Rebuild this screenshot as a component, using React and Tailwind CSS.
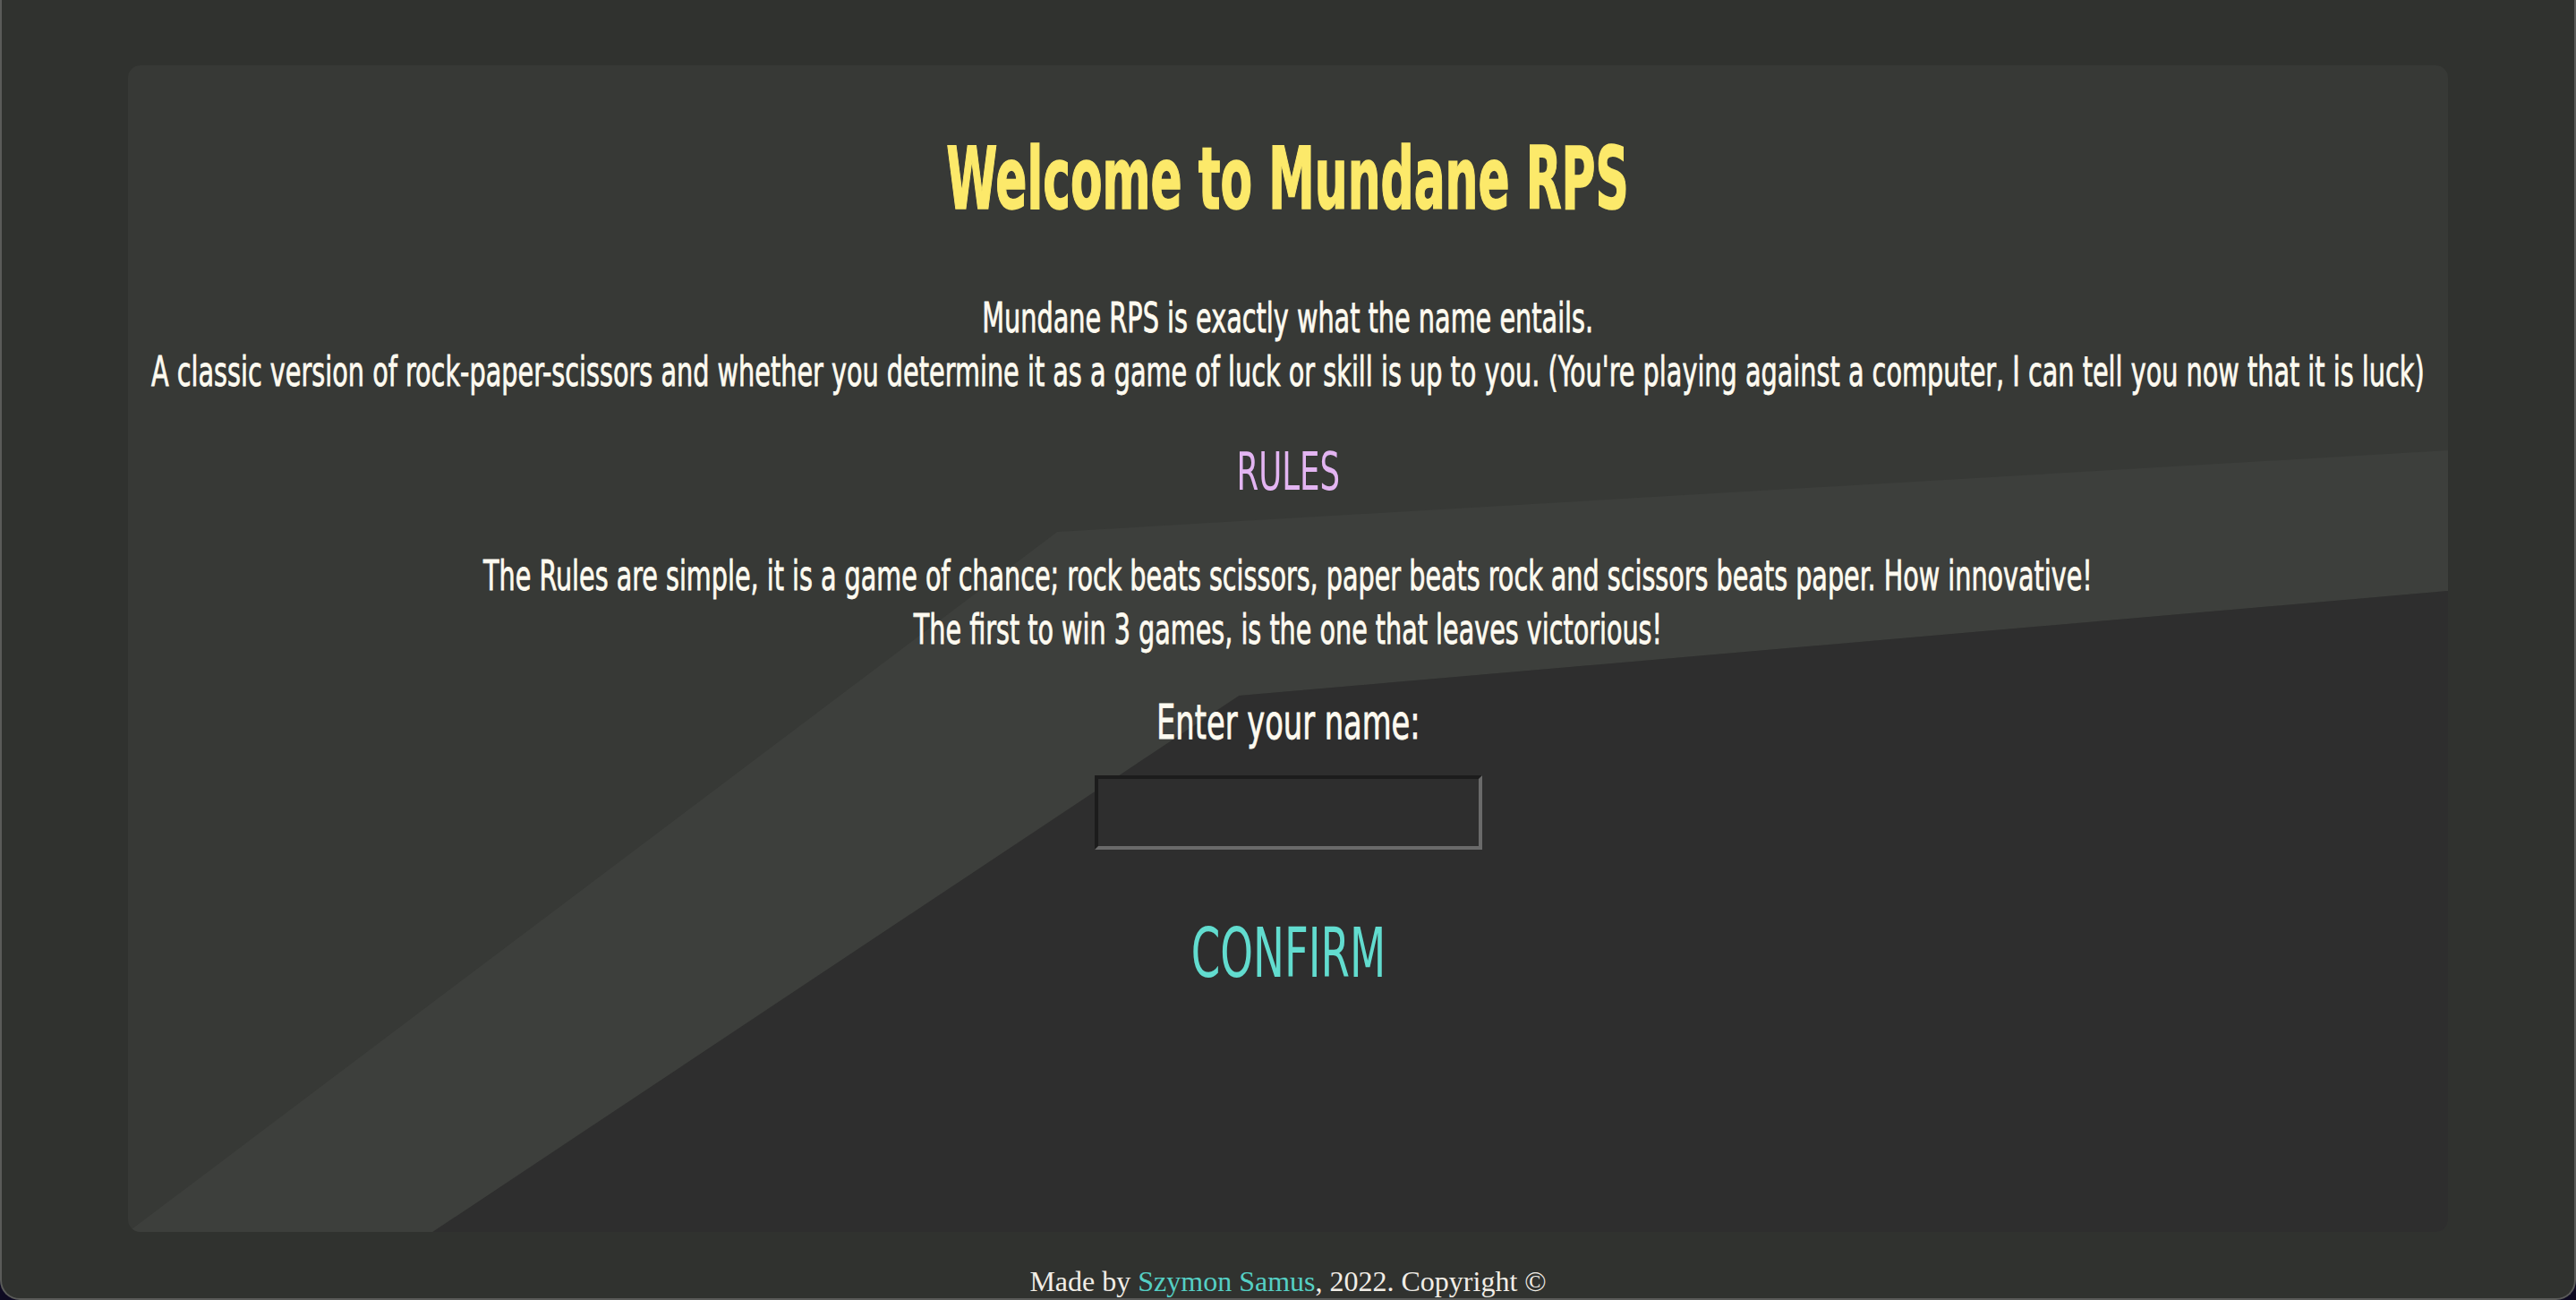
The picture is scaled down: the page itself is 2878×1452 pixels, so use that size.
import React, { useState } from 'react';

const narrow = "font-['DejaVu_Sans_Condensed','DejaVu_Sans',sans-serif]";

const CardBackdrop = () => (
  <svg
    className="absolute inset-0 h-full w-full"
    viewBox="0 0 2589 1303"
    preserveAspectRatio="none"
    aria-hidden="true"
  >
    <rect width="2589" height="1303" fill="#373936" />
    <polygon points="0,1303 1037,521 2589,430 2589,587 1240,704 340,1303" fill="#3d3f3c" />
    <polygon points="340,1303 1240,704 2589,587 2589,1303" fill="#2e2e2e" />
  </svg>
);

const App = () => {
  const [name, setName] = useState('');

  return (
    <div className="min-h-screen bg-[#0e0a22]">
      <div className="flex h-[1452px] flex-col overflow-hidden rounded-b-[22px] border-2 border-t-0 border-[#5a5b59] bg-[#30322f]">
        <div className="px-[141px] pt-[73px]">
          <div className="relative h-[1303px] overflow-hidden rounded-[14px]">
            <CardBackdrop />

            {/* text is squeezed horizontally to stand in for a condensed display face */}
            <div className={`relative flex flex-col items-center text-center text-[#fdfaf0] ${narrow}`}>
              <h1 className="mt-[67px] w-max scale-x-[0.6] text-[96px] leading-[120px] font-bold whitespace-nowrap text-[#fce96a] [-webkit-text-stroke:1.5px_#fce96a]">
                Welcome to Mundane RPS
              </h1>

              <p className="mt-[65px] w-max scale-x-[0.694] text-[46px] leading-[60px] whitespace-nowrap [-webkit-text-stroke:0.8px_#fdfaf0]">
                Mundane RPS is exactly what the name entails.
                <br />
                A classic version of rock-paper-scissors and whether you determine it as a game of luck or skill is up to you. (You're playing against a computer, I can tell you now that it is luck)
              </p>

              <h2 className="mt-[47px] w-max scale-x-[0.67] text-[59px] leading-[70px] text-[#e3b5f2]">RULES</h2>

              <p className="mt-[51px] w-max scale-x-[0.692] text-[46px] leading-[60px] whitespace-nowrap [-webkit-text-stroke:0.8px_#fdfaf0]">
                The Rules are simple, it is a game of chance; rock beats scissors, paper beats rock and scissors beats paper. How innovative!
                <br />
                The first to win 3 games, is the one that leaves victorious!
              </p>

              <label htmlFor="player-name" className="mt-[42px] w-max scale-x-[0.707] text-[53px] leading-[64px] whitespace-nowrap [-webkit-text-stroke:0.8px_#fdfaf0]">
                Enter your name:
              </label>

              <input
                id="player-name"
                type="text"
                value={name}
                onChange={(e) => setName(e.target.value)}
                className="mt-[27px] h-[83px] w-[433px] border-4 border-t-[#1c1c1c] border-l-[#1c1c1c] border-r-[#6a6a6a] border-b-[#6a6a6a] bg-[#2e2e2e] px-3 text-[40px] text-[#fdfaf0] outline-none"
              />

              <button className="mt-[71px] w-max scale-x-[0.674] text-[77px] leading-[90px] text-[#62dccf]">
                CONFIRM
              </button>
            </div>
          </div>
        </div>

        <footer className="mt-[31px] text-center font-['Liberation_Serif',serif] text-[32px] text-[#f1ede6]">
          Made by <a href="#" className="text-[#55cfc4]">Szymon Samus</a>, 2022. Copyright ©
        </footer>
      </div>
    </div>
  );
};

export default App;
